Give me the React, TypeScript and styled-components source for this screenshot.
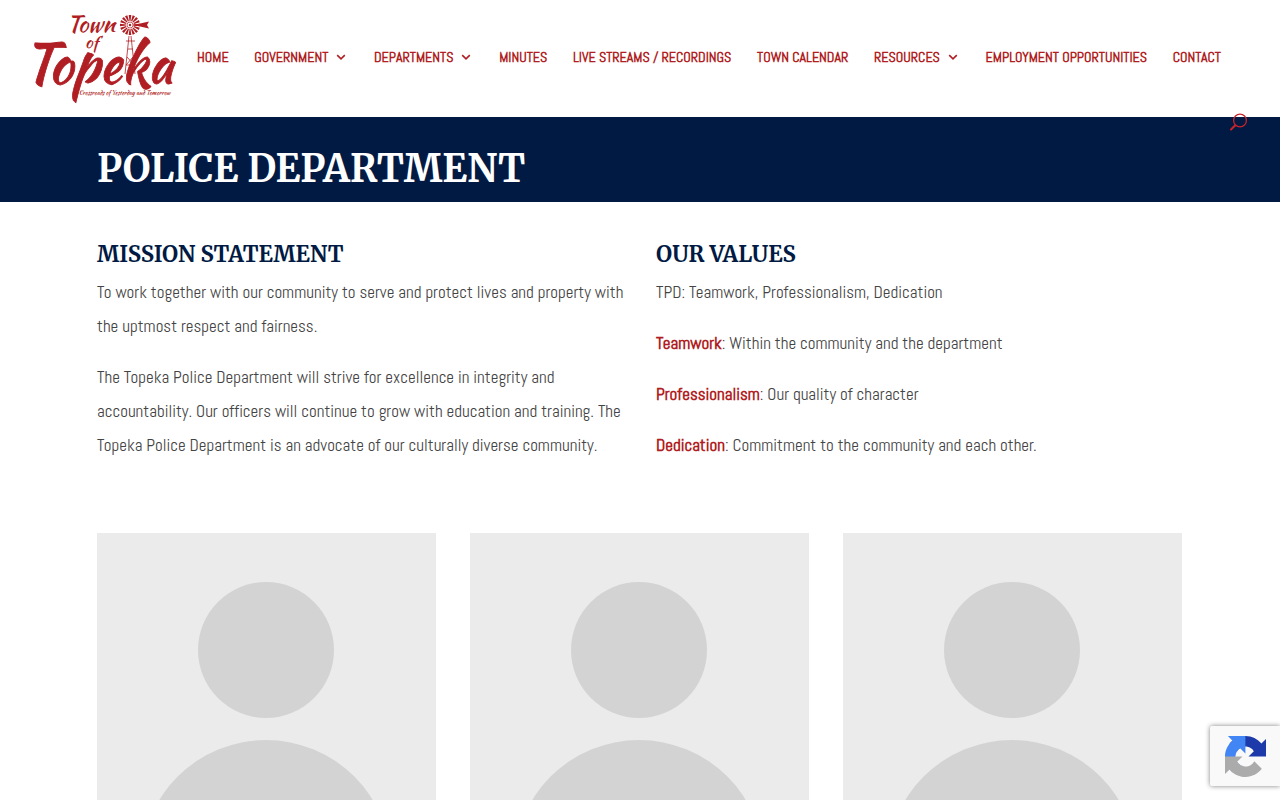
import React from "react";
import styled, { createGlobalStyle } from "styled-components";

const red = "#b01e23";
const navy = "#001a43";
const sans = `Abel, "Roboto Condensed", "Liberation Sans", sans-serif`;
const serif = `Merriweather, "Liberation Serif", serif`;

const GlobalStyle = createGlobalStyle`
  * { box-sizing: border-box; }
  body {
    margin: 0;
    background: #fff;
    color: #444;
    font: 17px/34px ${sans};
    overflow-x: hidden;
  }
  h1, h2, p { margin: 0; }
`;

const Header = styled.header`
  position: relative;
  display: flex;
  align-items: center;
  min-height: 117px;
  padding: 0 59px 4px 33px;
`;

const LogoLink = styled.a`
  flex: none;
  display: block;
  width: 144px;
  height: 97px;
  margin-right: 20px;
`;

const Nav = styled.nav`
  flex: 1;
`;

const Menu = styled.ul`
  display: flex;
  justify-content: space-between;
  margin: 0;
  padding: 0;
  list-style: none;
`;

const MenuLink = styled.a`
  display: flex;
  align-items: center;
  gap: 8px;
  color: ${red};
  font-size: 14px;
  font-weight: 700;
  line-height: 20px;
  text-decoration: none;
  white-space: nowrap;
`;

const Chevron = styled.svg`
  width: 10px;
  height: 10px;
  margin-right: 2px;
`;

const SearchButton = styled.button`
  position: absolute;
  right: 32px;
  bottom: -15px;
  width: 19px;
  height: 19px;
  padding: 0;
  border: 0;
  background: none;
  svg { display: block; }
`;

const Banner = styled.section`
  padding: 25px 97px 6px;
  background: ${navy};
`;

const Title = styled.h1`
  color: #fff;
  font: 700 38px/54px ${serif};
`;

const Columns = styled.section`
  display: grid;
  grid-template-columns: 1fr 1fr;
  gap: 32px;
  padding: 34px 97px 0;
`;

const Column = styled.div`
  display: flex;
  flex-direction: column;
  gap: 17px;
`;

const Heading = styled.h2`
  margin-bottom: -14px;
  color: ${navy};
  font: 700 22px/36px ${serif};
`;

const Label = styled.strong`
  color: ${red};
`;

const Staff = styled.section`
  display: grid;
  grid-template-columns: repeat(3, 1fr);
  gap: 34px;
  padding: 71px 98px 54px 97px;
`;

const Portrait = styled.svg`
  display: block;
  width: 100%;
  background: #ebebeb;
`;

const Badge = styled.aside`
  position: fixed;
  right: 0;
  bottom: 14px;
  width: 70px;
  height: 60px;
  padding: 10px 15px;
  border-radius: 2px 0 0 2px;
  background: #f9f9f9;
  box-shadow: 0 0 5px #808080;
`;

const blades = Array.from({ length: 16 }, (_, i) => i * 22.5);

function Logo() {
  return (
    <svg viewBox="0 0 144 97" width="144" height="97" fill={red} role="img" aria-label="Town of Topeka" overflow="visible">
      <g fontFamily="'Kaushan Script', 'Caveat Brush', 'Liberation Sans', sans-serif">
        <text x="34" y="24" fontSize="23">Town</text>
        <text x="52" y="40" fontSize="17">of</text>
        <text x="-10" y="75" fontSize="54" stroke={red} strokeWidth=".8">Topeka</text>
        <text x="46" y="87" fontSize="6">Crossroads of Yesterday and Tomorrow</text>
      </g>
      <g transform="translate(97 17)">
        {blades.map((a) => (
          <path key={a} d="M-.5 -4L-1.3 -10L1.3 -10L.5 -4Z" transform={`rotate(${a})`} />
        ))}
        <circle r="3" fill="none" stroke={red} strokeWidth=".7" />
        <circle r="1.2" />
        <path d="M3 -.6L9 -1.2L19 -3.5L17 0L19 3.5L9 1.2L3 .6Z" />
      </g>
      <path d="M96 28L92 66M98 28L102 66M93 33H102M95 41H100M94 49L101 57M100 49L93 57M93 57H102" fill="none" stroke={red} strokeWidth=".8" />
    </svg>
  );
}

const menu = [
  { label: "HOME" },
  { label: "GOVERNMENT", sub: true },
  { label: "DEPARTMENTS", sub: true },
  { label: "MINUTES" },
  { label: "LIVE STREAMS / RECORDINGS" },
  { label: "TOWN CALENDAR" },
  { label: "RESOURCES", sub: true },
  { label: "EMPLOYMENT OPPORTUNITIES" },
  { label: "CONTACT" },
];

const values = [
  ["Teamwork", "Within the community and the department"],
  ["Professionalism", "Our quality of character"],
  ["Dedication", "Commitment to the community and each other."],
];

export default function App() {
  return (
    <>
      <GlobalStyle />
      <Header>
        <LogoLink href="#"><Logo /></LogoLink>
        <Nav>
          <Menu>
            {menu.map((m) => (
              <li key={m.label}>
                <MenuLink href="#">
                  {m.label}
                  {m.sub && (
                    <Chevron viewBox="0 0 10 10" fill="none" stroke={red} strokeWidth="1.6">
                      <path d="M1.2 3.2L5 6.8L8.8 3.2" />
                    </Chevron>
                  )}
                </MenuLink>
              </li>
            ))}
          </Menu>
        </Nav>
        <SearchButton aria-label="Search">
          <svg width="19" height="19" viewBox="0 0 19 19" fill="none" stroke="#c8232a" strokeLinecap="round">
            <circle cx="11" cy="7.5" r="6.4" strokeWidth="1.3" />
            <path d="M6 12.5L2 16.5" strokeWidth="2" />
          </svg>
        </SearchButton>
      </Header>
      <main>
        <Banner><Title>POLICE DEPARTMENT</Title></Banner>
        <Columns>
          <Column>
            <Heading>MISSION STATEMENT</Heading>
            <p>To work together with our community to serve and protect lives and property with the uptmost respect and fairness.</p>
            <p>The Topeka Police Department will strive for excellence in integrity and accountability. Our officers will continue to grow with education and training. The Topeka Police Department is an advocate of our culturally diverse community.</p>
          </Column>
          <Column>
            <Heading>OUR VALUES</Heading>
            <p>TPD: Teamwork, Professionalism, Dedication</p>
            {values.map(([name, text]) => (
              <p key={name}><Label>{name}</Label>: {text}</p>
            ))}
          </Column>
        </Columns>
        <Staff>
          {[1, 2, 3].map((n) => (
            <Portrait key={n} viewBox="0 0 339 339" fill="#d3d3d3" aria-hidden="true">
              <circle cx="169" cy="117" r="68" />
              <circle cx="169" cy="332" r="125" />
            </Portrait>
          ))}
        </Staff>
      </main>
      <Badge aria-label="reCAPTCHA">
        <svg width="41" height="41" viewBox="0 0 64 64">
          <path fill="#1c3aa9" d="M64 31.955l-.033-1.37V4.687l-7.16 7.16C50.948 4.674 42.033.093 32.05.093c-10.4 0-19.622 4.96-25.458 12.64l11.736 11.86a15.55 15.55 0 0 1 4.754-5.334c2.05-1.6 4.952-2.906 8.968-2.906.485 0 .86.057 1.135.163 4.976.393 9.288 3.14 11.828 7.124l-8.307 8.307L64 31.953" />
          <path fill="#4285f4" d="M31.862.094l-1.37.033H4.594l7.16 7.16C4.58 13.147 0 22.06 0 32.046c0 10.4 4.96 19.622 12.64 25.458L24.5 45.768a15.55 15.55 0 0 1-5.334-4.754c-1.6-2.05-2.906-4.952-2.906-8.968 0-.485.057-.86.163-1.135.393-4.976 3.14-9.288 7.124-11.828l8.307 8.307L31.86.095" />
          <path fill="#ababab" d="M.001 32.045l.033 1.37v25.898l7.16-7.16c5.86 7.173 14.774 11.754 24.76 11.754 10.4 0 19.622-4.96 25.458-12.64l-11.736-11.86a15.55 15.55 0 0 1-4.754 5.334c-2.05 1.6-4.952 2.906-8.968 2.906-.485 0-.86-.057-1.135-.163-4.976-.393-9.288-3.14-11.828-7.124l8.307-8.307c-10.522.04-22.4.066-27.295-.005" />
        </svg>
      </Badge>
    </>
  );
}
